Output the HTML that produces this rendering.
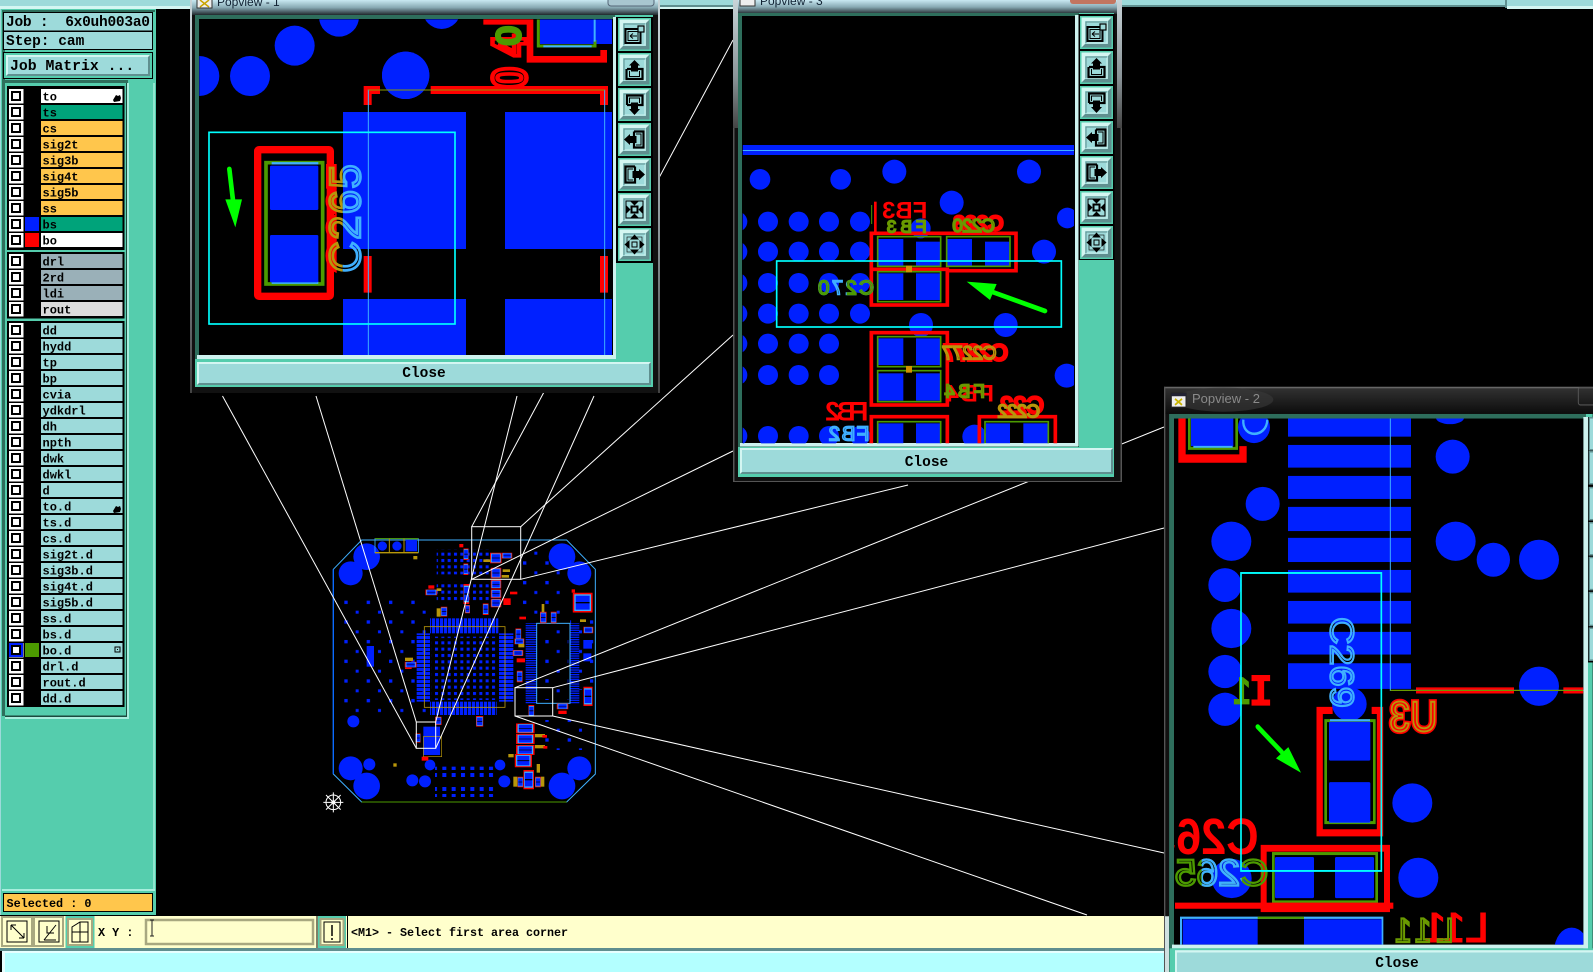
<!DOCTYPE html>
<html><head><meta charset="utf-8"><title>Popview</title>
<style>
html,body{margin:0;padding:0;background:#000;width:1593px;height:972px;overflow:hidden}
svg{display:block;position:absolute;left:0;top:0}
.m{font-family:"Liberation Mono",monospace;font-weight:bold;fill:#000}
.r{font-size:12px}
.s{font-family:"Liberation Sans",sans-serif}
.big{font-family:"Liberation Sans",sans-serif;font-weight:bold}
.thin{font-family:"Liberation Sans",sans-serif;fill:none}
</style></head>
<body>
<svg width="1593" height="972" viewBox="0 0 1593 972" xmlns="http://www.w3.org/2000/svg">
<defs>
<linearGradient id="tt" x1="0" y1="0" x2="0" y2="1"><stop offset="0" stop-color="#c9e9f2"/><stop offset=".5" stop-color="#88aab4"/><stop offset="1" stop-color="#20282c"/></linearGradient>
<linearGradient id="edge" x1="0" y1="0" x2="0" y2="1"><stop offset="0" stop-color="#c8d4d8"/><stop offset=".6" stop-color="#8a9498"/><stop offset="1" stop-color="#444"/></linearGradient>
<linearGradient id="dk" x1="0" y1="0" x2="0" y2="1"><stop offset="0" stop-color="#333"/><stop offset="1" stop-color="#0c0c0c"/></linearGradient>
<pattern id="d1" width="19" height="19" patternUnits="userSpaceOnUse"><rect x="3" y="3" width="9" height="9" fill="#0020ff"/></pattern>
<pattern id="d2" width="28" height="21" patternUnits="userSpaceOnUse"><rect x="3" y="3" width="12" height="12" fill="#0020ff"/></pattern>
<pattern id="d3" width="67" height="59" patternUnits="userSpaceOnUse"><rect x="6" y="6" width="10" height="10" fill="#0020ff"/><rect x="40" y="36" width="9" height="9" fill="#0020ff"/></pattern>
<pattern id="sv" width="12" height="12" patternUnits="userSpaceOnUse"><rect x="0" y="0" width="9.500" height="12" fill="#0020ff"/></pattern>
<pattern id="sh" width="12" height="12" patternUnits="userSpaceOnUse"><rect x="0" y="0" width="12" height="9.500" fill="#0020ff"/></pattern>
<pattern id="sh7" width="7" height="7" patternUnits="userSpaceOnUse"><rect x="0" y="0" width="7" height="4" fill="#0020ff"/></pattern>
<symbol id="k" viewBox="0 0 30 30" preserveAspectRatio="none">
<rect x="1.500" y="1.500" width="27" height="27" fill="#000" stroke="#f00" stroke-width="3"/>
<rect x="3" y="3" width="24" height="11" fill="#0020ff"/><rect x="3" y="16" width="24" height="11" fill="#0020ff"/>
<rect x="3.500" y="3.500" width="23" height="23" fill="none" stroke="#3fb0ff" stroke-width="2"/>
</symbol>
<g id="c"><rect x="9" y="0" width="14.500" height="14.500" fill="#fff"/><rect x="11" y="2" width="10" height="10" fill="#000"/><rect x="13" y="4" width="6" height="6" fill="#fff"/></g>
<g id="bb"><rect width="33" height="33" fill="#55cdad"/><rect x="1.500" y="1.500" width="30" height="30" fill="#5f8f8f"/><path d="M1.500 1.500H31.500L28 5H5V28L1.500 31.500Z" fill="#d4f6f2"/><rect x="5" y="5" width="23" height="23" fill="#9ddada"/><path d="M6 27V6H27" fill="none" stroke="#5f8f8f"/><path d="M6.500 27H27V6.500" fill="none" stroke="#cdf2ef"/></g>
<g id="b1"><use href="#bb"/><rect x="7.500" y="11" width="15" height="14" fill="none" stroke="#000" stroke-width="2"/><rect x="10" y="13.500" width="10" height="9" fill="none" stroke="#000"/><path d="M12 18H19M12 18l3-2.500M12 18l3 2.500" stroke="#000" fill="none"/><rect x="20" y="8" width="6" height="6" fill="#9ddada" stroke="#000" stroke-width="1.200"/></g>
<g id="b2"><use href="#bb"/><path d="M9 16H13M20 16H24.500V26H8.500V16" fill="none" stroke="#000" stroke-width="2.200"/><path d="M11.500 18V23.500H21.500V18" fill="none" stroke="#000"/><path d="M16.500 7L22 12.500H20V18.500H13V12.500H11Z" fill="#000"/></g>
<g id="b3"><use href="#bb"/><path d="M9 17V7.500H24.500V17H20M13 17H9" fill="none" stroke="#000" stroke-width="2.200"/><path d="M11.500 15V10H21.500V15" fill="none" stroke="#000"/><path d="M16.500 27L22 21H20V14.500H13V21H11Z" fill="#000"/></g>
<g id="b4"><use href="#bb"/><path d="M16 8.500H25.500V24.500H16V20M16 13V8.500" fill="none" stroke="#000" stroke-width="2.200"/><path d="M18 11H23V22H18" fill="none" stroke="#000"/><path d="M6 16.500L12 11V13H18.500V20H12V22Z" fill="#000"/></g>
<g id="b5"><use href="#bb"/><path d="M17 8.500H7.500V24.500H17V20M17 13V8.500" fill="none" stroke="#000" stroke-width="2.200"/><path d="M15 11H10V22H15" fill="none" stroke="#000"/><path d="M27 16.500L21 11V13H14.500V20H21V22Z" fill="#000"/></g>
<g id="b6"><use href="#bb"/><rect x="8" y="8" width="17" height="17" fill="none" stroke="#000"/><rect x="13.500" y="13.500" width="6" height="6" fill="none" stroke="#000" stroke-width="2"/><path d="M16.500 12.500L11.500 7.500H21.500ZM16.500 20.500L11.500 25.500H21.500ZM12.500 16.500L7.500 11.500V21.500ZM20.500 16.500L25.500 11.500V21.500Z" fill="#000"/></g>
<g id="b7"><use href="#bb"/><rect x="14" y="14" width="5" height="5" fill="none" stroke="#000"/><path d="M16.500 6.500L12 11.500H21ZM16.500 26.500L12 21.500H21ZM6.500 16.500L11.500 12V21ZM26.500 16.500L21.500 12V21Z" fill="#000"/><rect x="9" y="9" width="15" height="15" fill="none" stroke="#000" stroke-width=".6"/></g>
<g id="side"><use href="#b1" y="0"/><use href="#b2" y="35"/><use href="#b3" y="70"/><use href="#b4" y="105"/><use href="#b5" y="140"/><use href="#b6" y="175"/><use href="#b7" y="210"/></g>
<clipPath id="cp1"><rect x="28" y="58" width="1240" height="1007"/></clipPath>
<clipPath id="cp1a"><rect x="400" y="480" width="40" height="350"/></clipPath>
<clipPath id="cp1g"><rect x="400" y="480" width="58" height="350"/></clipPath>
<clipPath id="cp1b"><rect x="458" y="480" width="70" height="350"/></clipPath>
<clipPath id="cp3"><rect x="38" y="48" width="994" height="1282"/></clipPath>
<clipPath id="cp3g"><rect x="260" y="820" width="40" height="80"/><rect x="350" y="820" width="85" height="80"/></clipPath>
<clipPath id="cp2"><rect x="42" y="102" width="1228" height="1393"/></clipPath>
<clipPath id="cp2b"><rect x="125" y="1260" width="120" height="90"/></clipPath>
</defs>

<rect width="1593" height="972" fill="#000"/>

<!-- top strips -->
<rect x="0" y="0" width="190" height="6" fill="#9ddada"/><rect x="0" y="6" width="190" height="3" fill="#d4f6f2"/>
<rect x="660" y="0" width="74" height="5" fill="#9ddada"/><rect x="660" y="5" width="74" height="2" fill="#5f8f8f"/><rect x="660" y="7" width="74" height="2" fill="#d4f6f2"/>
<rect x="1120" y="0" width="385" height="5" fill="#9ddada"/><rect x="1120" y="5" width="385" height="2" fill="#5f8f8f"/><rect x="1505" y="0" width="2" height="8" fill="#5f8f8f"/>
<rect x="1507" y="0" width="86" height="6" fill="#9ddada"/><rect x="1507" y="6" width="86" height="3" fill="#d4f6f2"/>

<!-- sidebar -->
<rect x="0" y="9" width="156" height="906" fill="#55cdad"/>
<rect x="0" y="9" width="1" height="906" fill="#9ddada"/>
<rect x="2" y="10" width="3" height="706" fill="#2e6e5c"/>
<rect x="2" y="10" width="153" height="2" fill="#2e6e5c"/>
<rect x="3" y="12" width="150" height="38" fill="#000"/>
<rect x="4" y="13" width="148" height="17.500" fill="#9ddada"/><rect x="4" y="32" width="148" height="17" fill="#9ddada"/>
<text class="m" x="6" y="26" font-size="14.500" textLength="144">Job :&#160;&#160;6x0uh003a0</text>
<text class="m" x="6" y="45" font-size="14.500">Step: cam</text>
<rect x="3" y="52" width="150" height="27" fill="#000"/><rect x="4" y="53" width="148" height="25" fill="#55cdad"/>
<rect x="6" y="55" width="144" height="21" fill="#5f8f8f"/><path d="M6 55H150L148 57H8V74L6 76Z" fill="#d4f6f2"/><rect x="8" y="57" width="140" height="17" fill="#9ddada"/>
<text class="m" x="10" y="70" font-size="14.800">Job Matrix ...</text>
<rect x="2" y="80" width="126" height="3" fill="#2e6e5c"/>
<rect x="5" y="83" width="121" height="632" fill="#55cdad"/>
<rect x="5" y="715.500" width="122" height="1.500" fill="#1d4a3e"/>
<rect x="126" y="83" width="1" height="634" fill="#1d4a3e"/>
<rect x="127" y="83" width="2" height="636" fill="#a8eedd"/><rect x="5" y="717" width="124" height="2" fill="#a8eedd"/>
<rect x="153" y="83" width="2" height="808" fill="#8fe6cf"/>
<rect x="2" y="889" width="153" height="2" fill="#a8eedd"/>
<rect x="7" y="86" width="117.500" height="164" fill="#000"/>
<rect x="7" y="252" width="117.500" height="66.500" fill="#000"/>
<rect x="7" y="321" width="117.500" height="386" fill="#000"/>

<g class="m r">
<g fill="#fff"><rect x="41" y="89" width="81.500" height="14"/><rect x="41" y="233" width="81.500" height="14"/></g>
<g fill="#00a37a"><rect x="41" y="105" width="81.500" height="14"/><rect x="41" y="217" width="81.500" height="14"/></g>
<g fill="#ffc64c"><rect x="41" y="121" width="81.500" height="14"/><rect x="41" y="137" width="81.500" height="14"/><rect x="41" y="153" width="81.500" height="14"/><rect x="41" y="169" width="81.500" height="14"/><rect x="41" y="185" width="81.500" height="14"/><rect x="41" y="201" width="81.500" height="14"/></g>
<g fill="#9ab0b8"><rect x="41" y="254" width="81.500" height="14"/><rect x="41" y="270" width="81.500" height="14"/><rect x="41" y="286" width="81.500" height="14"/></g>
<rect x="41" y="302" width="81.500" height="14" fill="#dcdcdc"/>
<g fill="#9ddada"><rect x="41" y="323" width="81.500" height="14"/><rect x="41" y="339" width="81.500" height="14"/><rect x="41" y="355" width="81.500" height="14"/><rect x="41" y="371" width="81.500" height="14"/><rect x="41" y="387" width="81.500" height="14"/><rect x="41" y="403" width="81.500" height="14"/><rect x="41" y="419" width="81.500" height="14"/><rect x="41" y="435" width="81.500" height="14"/><rect x="41" y="451" width="81.500" height="14"/><rect x="41" y="467" width="81.500" height="14"/><rect x="41" y="483" width="81.500" height="14"/><rect x="41" y="499" width="81.500" height="14"/><rect x="41" y="515" width="81.500" height="14"/><rect x="41" y="531" width="81.500" height="14"/><rect x="41" y="547" width="81.500" height="14"/><rect x="41" y="563" width="81.500" height="14"/><rect x="41" y="579" width="81.500" height="14"/><rect x="41" y="595" width="81.500" height="14"/><rect x="41" y="611" width="81.500" height="14"/><rect x="41" y="627" width="81.500" height="14"/><rect x="41" y="643" width="81.500" height="14"/><rect x="41" y="659" width="81.500" height="14"/><rect x="41" y="675" width="81.500" height="14"/><rect x="41" y="691" width="81.500" height="14"/></g>
</g>
<use href="#c" y="89"/><use href="#c" y="105"/><use href="#c" y="121"/><use href="#c" y="137"/><use href="#c" y="153"/><use href="#c" y="169"/><use href="#c" y="185"/><use href="#c" y="201"/><use href="#c" y="217"/><use href="#c" y="233"/>
<use href="#c" y="254"/><use href="#c" y="270"/><use href="#c" y="286"/><use href="#c" y="302"/>
<use href="#c" y="323"/><use href="#c" y="339"/><use href="#c" y="355"/><use href="#c" y="371"/><use href="#c" y="387"/><use href="#c" y="403"/><use href="#c" y="419"/><use href="#c" y="435"/><use href="#c" y="451"/><use href="#c" y="467"/><use href="#c" y="483"/><use href="#c" y="499"/><use href="#c" y="515"/><use href="#c" y="531"/><use href="#c" y="547"/><use href="#c" y="563"/><use href="#c" y="579"/><use href="#c" y="595"/><use href="#c" y="611"/><use href="#c" y="627"/><use href="#c" y="643"/><use href="#c" y="659"/><use href="#c" y="675"/><use href="#c" y="691"/>
<rect x="10" y="644" width="12" height="12" fill="none" stroke="#0020ff" stroke-width="2"/>
<rect x="25" y="217" width="14" height="14" fill="#0020ff"/><rect x="25" y="233" width="14" height="14" fill="#f00"/><rect x="25" y="643" width="14" height="14" fill="#4c9a00"/>
<g class="m r">
<text x="42.500" y="100.500">to</text><text x="42.500" y="116.500">ts</text><text x="42.500" y="132.500">cs</text><text x="42.500" y="148.500">sig2t</text><text x="42.500" y="164.500">sig3b</text><text x="42.500" y="180.500">sig4t</text><text x="42.500" y="196.500">sig5b</text><text x="42.500" y="212.500">ss</text><text x="42.500" y="228.500">bs</text><text x="42.500" y="244.500">bo</text>
<text x="42.500" y="265.500">drl</text><text x="42.500" y="281.500">2rd</text><text x="42.500" y="297.500">ldi</text><text x="42.500" y="313.500">rout</text>
<text x="42.500" y="334.500">dd</text><text x="42.500" y="350.500">hydd</text><text x="42.500" y="366.500">tp</text><text x="42.500" y="382.500">bp</text><text x="42.500" y="398.500">cvia</text><text x="42.500" y="414.500">ydkdrl</text><text x="42.500" y="430.500">dh</text><text x="42.500" y="446.500">npth</text><text x="42.500" y="462.500">dwk</text><text x="42.500" y="478.500">dwkl</text><text x="42.500" y="494.500">d</text><text x="42.500" y="510.500">to.d</text><text x="42.500" y="526.500">ts.d</text><text x="42.500" y="542.500">cs.d</text><text x="42.500" y="558.500">sig2t.d</text><text x="42.500" y="574.500">sig3b.d</text><text x="42.500" y="590.500">sig4t.d</text><text x="42.500" y="606.500">sig5b.d</text><text x="42.500" y="622.500">ss.d</text><text x="42.500" y="638.500">bs.d</text><text x="42.500" y="654.500">bo.d</text><text x="42.500" y="670.500">drl.d</text><text x="42.500" y="686.500">rout.d</text><text x="42.500" y="702.500">dd.d</text>
</g>
<path d="M113 100l3-5 2 1 2-1 1 3-1 3-6 1zM113 511l3-5 2 1 2-1 1 3-1 3-6 1z" fill="#000"/>
<rect x="115" y="647" width="5" height="5" fill="none" stroke="#000"/><rect x="117" y="649" width="1" height="1" fill="#000"/>
<!-- selected -->
<rect x="3" y="893" width="150" height="19" fill="#000"/><rect x="4" y="894" width="148" height="17" fill="#ffc64c"/>
<text class="m" x="6.500" y="907" font-size="11.800">Selected : 0</text>

<!-- board -->
<g transform="translate(320,520) scale(.33333)">
<g fill="#0020ff"><circle cx="140" cy="110" r="40"/><circle cx="92" cy="160" r="36"/><circle cx="726" cy="110" r="40"/><circle cx="778" cy="160" r="36"/>
<circle cx="92" cy="745" r="36"/><circle cx="140" cy="798" r="40"/><circle cx="778" cy="745" r="36"/><circle cx="726" cy="798" r="40"/>
<circle cx="148" cy="733" r="18"/><circle cx="330" cy="735" r="16"/><circle cx="540" cy="735" r="16"/><circle cx="277" cy="781" r="18"/><circle cx="315" cy="784" r="18"/><circle cx="553" cy="784" r="18"/><circle cx="100" cy="604" r="18"/>
<rect x="140" y="378" width="22" height="62"/></g>
<rect x="350" y="88" width="160" height="75" fill="url(#d1)"/>
<rect x="350" y="184" width="160" height="62" fill="url(#d1)"/>
<rect x="335" y="350" width="195" height="190" fill="url(#d1)"/>
<rect x="345" y="740" width="180" height="36" fill="url(#d2)"/>
<rect x="345" y="795" width="180" height="36" fill="url(#d2)"/>
<rect x="70" y="230" width="260" height="360" fill="url(#d3)"/>
<rect x="590" y="90" width="150" height="200" fill="url(#d3)"/>
<rect x="655" y="320" width="90" height="220" fill="url(#d3)"/>
<rect x="660" y="600" width="130" height="90" fill="url(#d3)"/>
<rect x="750" y="290" width="70" height="220" fill="url(#d3)"/>
<rect x="330" y="295" width="205" height="45" fill="url(#sv)"/><rect x="330" y="545" width="200" height="40" fill="url(#sv)"/>
<rect x="290" y="340" width="40" height="205" fill="url(#sh)"/><rect x="537" y="340" width="43" height="205" fill="url(#sh)"/>
<rect x="313" y="320" width="242" height="242" fill="none" stroke="#b8960a" stroke-width="2.500"/>
<rect x="617" y="310" width="33" height="240" fill="url(#sh7)"/><rect x="750" y="310" width="28" height="240" fill="url(#sh7)"/>
<rect x="650" y="310" width="100" height="240" fill="none" stroke="#3fb0ff" stroke-width="3"/>
<rect x="310" y="620" width="50" height="85" fill="#0020ff"/>
<rect x="310" y="650" width="55" height="60" fill="none" stroke="#b8960a" stroke-width="2"/>
<rect x="790" y="360" width="26" height="26" fill="#0020ff"/><rect x="790" y="400" width="24" height="24" fill="#0020ff"/>
<path d="M40 148L125 60H740L826 148V762L740 846H125L40 762Z" fill="none" stroke="#3fb0ff" stroke-width="3"/>
<path d="M125 846H740" stroke="#4c9a00" stroke-width="3"/>
<path d="M40 148V762" stroke="#0a6aff" stroke-width="4"/>
<rect x="165" y="56" width="130" height="42" fill="none" stroke="#3fb0ff" stroke-width="2.500"/><path d="M165 56H295" stroke="#4c9a00" stroke-width="3"/><path d="M165 98H295" stroke="#b8960a" stroke-width="4"/><path d="M208 56V98M252 56V98" stroke="#b8960a" stroke-width="3"/>
<circle cx="187" cy="78" r="14" fill="#0020ff"/><circle cx="231" cy="78" r="14" fill="#0020ff"/><rect x="257" y="60" width="34" height="34" fill="#0020ff"/>
<use href="#k" x="316" y="208" width="36" height="18"/><use href="#k" x="254" y="425" width="36" height="18"/><use href="#k" x="510" y="98" width="35" height="32"/><use href="#k" x="545" y="98" width="32" height="18"/><use href="#k" x="512" y="143" width="32" height="32"/>
<use href="#k" x="512" y="180" width="32" height="26"/><use href="#k" x="512" y="208" width="32" height="26"/><use href="#k" x="512" y="236" width="32" height="26"/>
<use href="#k" x="430" y="85" width="16" height="35"/><use href="#k" x="430" y="130" width="15" height="35"/><use href="#k" x="430" y="192" width="18" height="60"/><use href="#k" x="435" y="255" width="15" height="25"/><use href="#k" x="488" y="250" width="18" height="35"/><use href="#k" x="362" y="260" width="20" height="30"/><use href="#k" x="660" y="275" width="20" height="35"/><use href="#k" x="692" y="275" width="18" height="35"/><use href="#k" x="586" y="325" width="18" height="35"/><use href="#k" x="583" y="355" width="30" height="18"/><use href="#k" x="578" y="390" width="32" height="18"/><use href="#k" x="590" y="452" width="18" height="35"/><use href="#k" x="758" y="218" width="60" height="60"/><use href="#k" x="790" y="500" width="28" height="58"/><use href="#k" x="625" y="555" width="18" height="35"/><use href="#k" x="710" y="550" width="35" height="18"/><use href="#k" x="588" y="610" width="56" height="30"/><use href="#k" x="588" y="642" width="56" height="30"/><use href="#k" x="588" y="675" width="56" height="30"/><use href="#k" x="584" y="702" width="52" height="40"/><use href="#k" x="610" y="750" width="32" height="58"/><use href="#k" x="592" y="770" width="18" height="32"/><use href="#k" x="645" y="770" width="18" height="32"/><use href="#k" x="468" y="588" width="22" height="32"/><use href="#k" x="345" y="590" width="20" height="25"/><use href="#k" x="286" y="640" width="16" height="28"/><use href="#k" x="790" y="320" width="30" height="20"/>
<g fill="#b8960a"><rect x="280" y="108" width="12" height="10"/><rect x="220" y="730" width="10" height="10"/><rect x="780" y="298" width="18" height="8"/><rect x="650" y="732" width="10" height="26"/><rect x="645" y="642" width="30" height="10"/><rect x="645" y="675" width="30" height="10"/><rect x="565" y="702" width="16" height="10"/><rect x="490" y="118" width="22" height="8"/><rect x="548" y="148" width="22" height="8"/><rect x="545" y="165" width="22" height="8"/><rect x="665" y="252" width="8" height="24"/><rect x="350" y="205" width="14" height="8"/><rect x="255" y="413" width="24" height="10"/><rect x="350" y="265" width="12" height="25"/><rect x="595" y="372" width="18" height="10"/><rect x="580" y="770" width="12" height="30"/><rect x="663" y="770" width="10" height="30"/></g>
<g fill="#f00"><rect x="418" y="72" width="12" height="10"/><rect x="550" y="235" width="22" height="20"/><rect x="570" y="215" width="22" height="8"/><rect x="590" y="415" width="25" height="12"/><rect x="715" y="572" width="25" height="10"/><rect x="305" y="710" width="20" height="12"/><rect x="755" y="208" width="10" height="10"/><rect x="598" y="290" width="20" height="8"/><rect x="667" y="645" width="14" height="8"/><rect x="670" y="678" width="12" height="8"/><rect x="325" y="196" width="18" height="10"/><rect x="255" y="443" width="20" height="4"/></g>
<g fill="none" stroke="#fff" stroke-width="3"><circle cx="40" cy="847" r="22"/><path d="M40 817V877M10 847H70M18 825L62 869M62 825L18 869"/></g>
<circle cx="40" cy="847" r="6" fill="#fff"/>
</g>

<!-- connector lines -->
<g stroke="#fff" stroke-width="1" fill="none">
<path d="M222.500 396L416.300 748.300"/><path d="M316 396L416.300 722"/><path d="M517 396L435.700 722"/><path d="M594 396L435.700 748.300"/>
<path d="M471.700 526.700L733 40"/><path d="M520.700 526.700L733 335"/><path d="M471.700 579.300L733 451"/><path d="M520.700 579.300L908 485"/>
<path d="M515 687.700L1164 427"/><path d="M552.700 687.700L1164 528"/><path d="M552.700 716L1164 853"/><path d="M515 716L1087 915"/>
<rect x="471.700" y="526.700" width="49" height="52.600"/><rect x="515" y="687.700" width="37.700" height="28.300"/><rect x="416.300" y="722" width="19.400" height="26.300"/>
</g>

<!-- bottom bar -->
<rect x="0" y="916" width="1170" height="32" fill="#ffffcc"/>
<rect x="0" y="948" width="1170" height="3" fill="#5f8f8f"/>
<rect x="2" y="951" width="1165" height="21" fill="#b3ffff"/><rect x="2" y="951" width="1165" height="2" fill="#e6ffff"/><rect x="2" y="951" width="3" height="21" fill="#e6ffff"/><rect x="0" y="951" width="2" height="21" fill="#000"/>
<!-- toolbar buttons -->
<g fill="none" stroke="#a8a880">
<rect x="2" y="917" width="30" height="29" stroke-width="2"/><rect x="34" y="917" width="29" height="29" stroke-width="2"/>
</g>
<rect x="7" y="921" width="20" height="21" fill="none" stroke="#000"/><path d="M11 925L24 938M11 925v5M11 925h5M24 938v-5M24 938h-5" fill="none" stroke="#000"/>
<rect x="39" y="921" width="20" height="21" fill="none" stroke="#000"/><path d="M44 940L56 925M44 940H56M47 926v7h7" fill="none" stroke="#000"/>
<rect x="65.500" y="916" width="29" height="32" fill="#55cdad"/><rect x="68" y="919" width="24" height="26" fill="#ffffcc" stroke="#a8a880" stroke-width="2"/>
<path d="M72 942V927L80 922H88V942ZM72 932H88M80 922V942" fill="none" stroke="#000"/>
<text class="m" x="98" y="936" font-size="11.800">X Y :</text>
<rect x="143" y="916" width="173" height="32" fill="#ffffcc"/><rect x="146" y="920" width="167" height="24" fill="none" stroke="#a8a880" stroke-width="2.500"/>
<path d="M152 920V936M150 920h4M150 936h4" stroke="#222" fill="none"/>
<rect x="316.500" y="916" width="1" height="32" fill="#000"/>
<rect x="318" y="916" width="28" height="32" fill="#55cdad"/><rect x="320.500" y="919" width="23" height="26" fill="#ffffcc" stroke="#a8a880" stroke-width="2"/>
<rect x="324" y="922" width="16" height="20" fill="none" stroke="#000"/><path d="M332 925V936M332 938v2" stroke="#000" stroke-width="1.500"/>
<rect x="347" y="916" width="1" height="32" fill="#000"/>
<text class="m" x="351" y="936" font-size="11.700" textLength="217">&lt;M1&gt; - Select first area corner</text>
<rect x="0" y="915" width="155" height="1" fill="#000"/>

<!-- POPVIEW 1 -->
<rect x="190" y="-10" width="470" height="403" rx="4" fill="#111"/>
<rect x="190" y="0" width="470" height="15" fill="url(#tt)"/>
<rect x="658" y="0" width="2" height="393" fill="url(#edge)"/><rect x="190" y="0" width="2" height="393" fill="url(#edge)"/>
<rect x="197" y="-2" width="15" height="10" fill="#eee" stroke="#333"/><path d="M200 0l9 7M209 0l-9 7" stroke="#c9a400" stroke-width="1.500"/>
<text class="s" x="217" y="6" font-size="12" fill="#123">Popview - 1</text>
<rect x="608" y="-6" width="46" height="12" rx="3" fill="#a8c6d0" stroke="#567"/>
<rect x="195" y="15" width="458" height="372" fill="#55cdad"/>
<rect x="195" y="15" width="420" height="344" fill="#2e6e5c"/>
<rect x="613" y="17" width="3" height="342" fill="#cdf2ef"/><rect x="197" y="355" width="419" height="4" fill="#cdf2ef"/>
<rect x="199" y="19" width="414" height="336" fill="#000"/>
<rect x="616" y="17" width="37" height="246" fill="#000"/>
<g transform="translate(190,0) scale(.33333)" clip-path="url(#cp1)">
<g fill="#0020ff"><circle cx="314" cy="137" r="60"/><circle cx="180" cy="228" r="60"/><circle cx="28" cy="228" r="60"/><circle cx="647" cy="226" r="71"/><circle cx="447" cy="50" r="60"/><circle cx="755" cy="30" r="57"/>
<rect x="459" y="336" width="369" height="411"/><rect x="945" y="336" width="321" height="411"/><rect x="459" y="897" width="369" height="168"/><rect x="945" y="897" width="321" height="168"/><rect x="1050" y="58" width="216" height="74"/></g>
<path d="M880 64H1020V178H1241V150" fill="none" stroke="#f00" stroke-width="20"/>
<path d="M1045 58V138H1215V120" fill="none" stroke="#4c9a00" stroke-width="9"/><path d="M1060 139H1205M1214 58V125" stroke="#3fb0ff" stroke-width="6" fill="none"/>
<text class="big" transform="translate(1008,265) rotate(-90) scale(1,1.25)" font-size="115" fill="none" stroke="#f00" stroke-width="11" textLength="160">04</text>
<text class="thin" transform="translate(990,135) rotate(-90)" font-size="100" stroke="#4c9a00" stroke-width="11" textLength="60">0</text>
<path d="M533 315V270H570M722 270H1242V315" fill="none" stroke="#f00" stroke-width="24"/>
<path d="M533 768V878M1242 768V878" stroke="#f00" stroke-width="24"/>
<circle cx="647" cy="226" r="71" fill="#0020ff"/>
<path d="M535 1065V270H1244V1065" fill="none" stroke="#3fb0ff" stroke-width="3"/><path d="M535 270H1244" stroke="#8a9a00" stroke-width="3"/>
<rect x="203" y="449" width="218" height="440" fill="#000" stroke="#f00" stroke-width="22" rx="4"/>
<rect x="228" y="488" width="170" height="364" fill="none" stroke="#4c9a00" stroke-width="11"/>
<path d="M245 490H385M245 848H385" stroke="#3fb0ff" stroke-width="7"/>
<rect x="240" y="497" width="145" height="133" rx="4" fill="#0020ff"/><rect x="240" y="705" width="145" height="142" rx="4" fill="#0020ff"/>
<g clip-path="url(#cp1a)"><text class="thin" transform="translate(510,818) rotate(-90)" font-size="130" stroke="#f00" stroke-width="24" textLength="325">C265</text></g>
<g clip-path="url(#cp1g)"><text class="thin" transform="translate(510,818) rotate(-90)" font-size="130" stroke="#b8960a" stroke-width="8" textLength="325">C265</text></g>
<g clip-path="url(#cp1b)"><text class="thin" transform="translate(510,818) rotate(-90)" font-size="130" stroke="#3fb0ff" stroke-width="8" textLength="325">C265</text></g>
<rect x="57" y="397" width="738" height="575" fill="none" stroke="#00ffff" stroke-width="5"/>
<path d="M118 507L130 610" stroke="#0f0" stroke-width="14" stroke-linecap="round"/><path d="M106 598H156L136 682Z" fill="#0f0"/>
</g>
<g transform="translate(618,18)"><use href="#side"/></g>
<rect x="197" y="362" width="454" height="23" fill="#5f8f8f"/><path d="M197 362H651L649 364H199V383L197 385Z" fill="#d4f6f2"/><rect x="199" y="364" width="450" height="19" fill="#9ddada"/>
<text class="m" x="424" y="377" font-size="14.500" text-anchor="middle">Close</text>

<!-- POPVIEW 3 -->
<rect x="733" y="-10" width="389" height="492" rx="4" fill="#111"/>
<rect x="733" y="0" width="389" height="14" fill="url(#tt)"/>
<rect x="733" y="0" width="5" height="128" fill="url(#edge)"/><rect x="1117" y="0" width="5" height="128" fill="url(#edge)"/>
<rect x="733" y="128" width="1.500" height="354" fill="#555"/><rect x="1120.500" y="128" width="1.500" height="354" fill="#555"/><rect x="733" y="481" width="389" height="1" fill="#555"/>
<rect x="740" y="-2" width="15" height="8" fill="#eee" stroke="#333"/>
<text class="s" x="760" y="5" font-size="12" fill="#123">Popview - 3</text>
<rect x="1070" y="-5" width="46" height="9" rx="3" fill="#c27560"/>
<rect x="738" y="13" width="376" height="464" fill="#55cdad"/>
<rect x="738" y="13" width="341" height="434" fill="#2e6e5c"/>
<rect x="1075" y="15" width="3.500" height="431" fill="#cdf2ef"/><rect x="740" y="443" width="338" height="3.500" fill="#cdf2ef"/>
<rect x="742" y="16" width="333" height="427" fill="#000"/>
<rect x="1078.500" y="14" width="36" height="246" fill="#000"/>
<g transform="translate(730,0) scale(.33333)" clip-path="url(#cp3)">
<rect x="38" y="435" width="994" height="30" fill="#0020ff"/><rect x="38" y="450" width="994" height="3" fill="#3fb0ff"/>
<g fill="#0020ff">
<circle cx="90" cy="538" r="31"/><circle cx="332" cy="538" r="31"/><circle cx="493" cy="515" r="36"/><circle cx="897" cy="515" r="36"/><circle cx="665" cy="608" r="36"/><circle cx="1012" cy="654" r="31"/><circle cx="942" cy="755" r="36"/><circle cx="1010" cy="1127" r="36"/><circle cx="572" cy="685" r="30"/><circle cx="573" cy="975" r="36"/><circle cx="827" cy="975" r="36"/><circle cx="733" cy="1310" r="36"/>
<circle cx="22" cy="665" r="30"/><circle cx="114" cy="665" r="30"/><circle cx="206" cy="665" r="30"/><circle cx="297" cy="665" r="30"/><circle cx="390" cy="665" r="30"/>
<circle cx="22" cy="755" r="30"/><circle cx="114" cy="755" r="30"/><circle cx="206" cy="755" r="30"/><circle cx="297" cy="755" r="30"/><circle cx="390" cy="755" r="30"/>
<circle cx="22" cy="849" r="30"/><circle cx="114" cy="849" r="30"/><circle cx="206" cy="849" r="30"/><circle cx="297" cy="849" r="30"/><circle cx="390" cy="849" r="30"/>
<circle cx="22" cy="941" r="30"/><circle cx="114" cy="941" r="30"/><circle cx="206" cy="941" r="30"/><circle cx="297" cy="941" r="30"/><circle cx="390" cy="941" r="30"/>
<circle cx="22" cy="1031" r="30"/><circle cx="114" cy="1031" r="30"/><circle cx="206" cy="1031" r="30"/><circle cx="297" cy="1031" r="30"/>
<circle cx="22" cy="1125" r="30"/><circle cx="114" cy="1125" r="30"/><circle cx="206" cy="1125" r="30"/><circle cx="297" cy="1125" r="30"/>
<circle cx="22" cy="1308" r="30"/><circle cx="114" cy="1308" r="30"/><circle cx="206" cy="1308" r="30"/><circle cx="297" cy="1308" r="30"/><circle cx="390" cy="1308" r="30"/>
</g>
<g fill="none" stroke="#f00" stroke-width="11">
<path d="M424 808V700H858V812H652"/><rect x="424" y="808" width="228" height="107"/><rect x="424" y="998" width="228" height="217"/>
<path d="M424 1330V1250H652V1330"/><path d="M748 1330V1250H976V1330"/>
</g>
<g fill="#0020ff">
<rect x="443" y="717" width="77" height="80"/><rect x="558" y="725" width="74" height="72"/><rect x="650" y="717" width="76" height="80"/><rect x="765" y="725" width="75" height="72"/>
<rect x="443" y="820" width="77" height="80"/><rect x="558" y="820" width="74" height="80"/>
<rect x="443" y="1015" width="77" height="80"/><rect x="558" y="1015" width="74" height="80"/><rect x="443" y="1120" width="77" height="82"/><rect x="558" y="1120" width="74" height="82"/>
<rect x="443" y="1270" width="77" height="60"/><rect x="558" y="1270" width="74" height="60"/><rect x="768" y="1270" width="72" height="60"/><rect x="880" y="1270" width="75" height="60"/>
</g>
<g fill="none" stroke="#4c9a00" stroke-width="5">
<rect x="443" y="710" width="189" height="89"/><rect x="650" y="710" width="190" height="89"/><rect x="443" y="815" width="189" height="90"/><rect x="443" y="1010" width="189" height="90"/><rect x="443" y="1112" width="189" height="93"/><path d="M443 1330V1265H632V1330M765 1330V1265H955V1330"/>
</g>
<g fill="#d09000"><rect x="528" y="797" width="18" height="20"/><rect x="528" y="1098" width="18" height="20"/></g>
<text class="big" transform="translate(592,655) scale(-1,1)" font-size="72" fill="#f00">FB3</text>
<text class="thin" transform="translate(590,698) scale(-1,1)" font-size="52" stroke="#6a9a00" stroke-width="5" textLength="120">FB3</text>
<path d="M436 605V700" stroke="#f00" stroke-width="8"/><path d="M425 615V672" stroke="#4c9a00" stroke-width="3"/>
<text class="thin" transform="translate(820,690) scale(-1,1)" font-size="62" stroke="#f00" stroke-width="9" textLength="150">C228</text>
<text class="thin" transform="translate(795,696) scale(-1,1)" font-size="56" stroke="#6a9a00" stroke-width="5" textLength="128">C220</text>
<text class="thin" transform="translate(432,884) scale(-1,1)" font-size="62" stroke="#3fb0ff" stroke-width="4.500" textLength="168">C270</text>
<g clip-path="url(#cp3g)"><text class="thin" transform="translate(432,884) scale(-1,1)" font-size="62" stroke="#4c9a00" stroke-width="4.500" textLength="168">C270</text></g>
<text class="thin" transform="translate(834,1082) scale(-1,1)" font-size="70" stroke="#f00" stroke-width="9" textLength="195">C2277</text>
<text class="thin" transform="translate(800,1078) scale(-1,1)" font-size="58" stroke="#b8960a" stroke-width="4.500" textLength="165">C2277</text>
<text class="big" transform="translate(792,1205) scale(-1,1)" font-size="72" fill="#f00" textLength="145">FB4</text>
<text class="thin" transform="translate(765,1192) scale(-1,1)" font-size="56" stroke="#6a9a00" stroke-width="5" textLength="122">FB4</text>
<text class="thin" transform="translate(942,1240) scale(-1,1)" font-size="72" stroke="#f00" stroke-width="8" textLength="132">C22</text>
<text class="thin" transform="translate(930,1252) scale(-1,1)" font-size="56" stroke="#b8960a" stroke-width="5" textLength="128">C222</text>
<text class="big" transform="translate(415,1262) scale(-1,1)" font-size="80" fill="#f00" textLength="130">FB2</text>
<text class="thin" transform="translate(418,1322) scale(-1,1)" font-size="62" stroke="#3fb0ff" stroke-width="5" textLength="122">FB2</text>
<rect x="140" y="783" width="854" height="198" fill="none" stroke="#00ffff" stroke-width="5"/>
<path d="M945 933L785 875" stroke="#0f0" stroke-width="14" stroke-linecap="round"/><path d="M710 845L800 852L780 900Z" fill="#0f0"/>
</g>
<g transform="translate(1080,16)"><use href="#side"/></g>
<rect x="740" y="448" width="373" height="26" fill="#5f8f8f"/><path d="M740 448H1113L1111 450H742V472L740 474Z" fill="#d4f6f2"/><rect x="742" y="450" width="369" height="22" fill="#9ddada"/>
<text class="m" x="926.500" y="466" font-size="14.500" text-anchor="middle">Close</text>

<!-- POPVIEW 2 -->
<g transform="translate(1160,380) scale(.33333,.37764)">
<rect x="12" y="18" width="1300" height="1560" rx="8" fill="#111"/>
<rect x="12" y="18" width="1300" height="72" fill="url(#dk)"/>
<rect x="12" y="18" width="1300" height="4" fill="#666"/><rect x="12" y="18" width="4" height="1560" fill="#555"/>
<ellipse cx="190" cy="52" rx="150" ry="32" fill="#3a3a3a" opacity=".6"/>
<rect x="34" y="35" width="44" height="37" fill="#eee" stroke="#222" stroke-width="3"/><rect x="34" y="35" width="44" height="8" fill="#223"/><path d="M45 50L66 66M66 50L45 66" stroke="#c9b400" stroke-width="5"/>
<rect x="1255" y="20" width="60" height="46" rx="6" fill="none" stroke="#555" stroke-width="3"/>
<rect x="15" y="1420" width="12" height="150" fill="#cfe0e0"/>
<rect x="28" y="90" width="1270" height="1480" fill="#55cdad"/>
<rect x="28" y="90" width="1250" height="1415" fill="#2e6e5c"/>
<rect x="1270" y="98" width="14" height="1407" fill="#cdf2ef"/><rect x="36" y="1495" width="1248" height="10" fill="#cdf2ef"/>
<rect x="42" y="102" width="1228" height="1393" fill="#000"/>
<rect x="1284" y="98" width="30" height="650" fill="#000"/>
<g fill="#9ddada" stroke="#5f8f8f" stroke-width="4"><rect x="1288" y="100" width="20" height="85"/><rect x="1288" y="190" width="20" height="85"/><rect x="1288" y="285" width="20" height="85"/><rect x="1288" y="378" width="20" height="85"/><rect x="1288" y="470" width="20" height="85"/><rect x="1288" y="563" width="20" height="87"/><rect x="1288" y="657" width="20" height="85"/></g>
<g clip-path="url(#cp2)">
<g fill="#0020ff">
<rect x="384" y="102" width="369" height="48"/><rect x="384" y="172" width="369" height="60"/><rect x="384" y="254" width="369" height="61"/><rect x="384" y="336" width="369" height="64"/><rect x="384" y="418" width="369" height="64"/><rect x="384" y="503" width="369" height="60"/><rect x="384" y="585" width="369" height="60"/><rect x="384" y="667" width="369" height="60"/><rect x="384" y="750" width="369" height="68"/>
<ellipse cx="870" cy="100" rx="42" ry="17"/><ellipse cx="878" cy="203" rx="51" ry="45"/><ellipse cx="308" cy="328" rx="51" ry="45"/><ellipse cx="214" cy="427" rx="60" ry="52"/><ellipse cx="195" cy="543" rx="50" ry="45"/><ellipse cx="214" cy="658" rx="60" ry="52"/><ellipse cx="195" cy="772" rx="50" ry="44"/><ellipse cx="195" cy="872" rx="50" ry="44"/><ellipse cx="887" cy="427" rx="60" ry="52"/><ellipse cx="1000" cy="476" rx="50" ry="45"/><ellipse cx="1137" cy="476" rx="60" ry="53"/><ellipse cx="1137" cy="811" rx="60" ry="52"/><ellipse cx="757" cy="1120" rx="60" ry="52"/><ellipse cx="775" cy="1318" rx="60" ry="53"/><ellipse cx="215" cy="1320" rx="60" ry="52"/><ellipse cx="1235" cy="1510" rx="52" ry="60"/><ellipse cx="282" cy="125" rx="48" ry="42"/>
<rect x="93" y="102" width="127" height="73"/>
</g>
<path d="M66 102V208H249V175" fill="none" stroke="#f00" stroke-width="22"/>
<path d="M88 102V181H230V102" fill="none" stroke="#4c9a00" stroke-width="8"/><path d="M100 177H218" stroke="#3fb0ff" stroke-width="5"/>
<path d="M250 105C245 155 320 155 322 105" fill="none" stroke="#3fb0ff" stroke-width="7"/>
<path d="M768 822H1062M1210 822H1270" stroke="#f00" stroke-width="16"/>
<path d="M691 102V822H1270" fill="none" stroke="#3fb0ff" stroke-width="3"/><path d="M691 822H1270" stroke="#6a9a00" stroke-width="3"/>
<path d="M518 875H479V1199H660V875H635" fill="none" stroke="#f00" stroke-width="19"/>
<ellipse cx="568" cy="858" rx="52" ry="45" fill="#0020ff"/>
<rect x="497" y="902" width="146" height="270" fill="none" stroke="#4c9a00" stroke-width="8"/>
<path d="M510 901H630M510 1170H630" stroke="#3fb0ff" stroke-width="5"/>
<rect x="507" y="905" width="124" height="103" rx="4" fill="#0020ff"/><rect x="507" y="1065" width="124" height="107" rx="4" fill="#0020ff"/>
<rect x="311" y="1240" width="370" height="160" fill="none" stroke="#f00" stroke-width="18"/>
<rect x="340" y="1254" width="310" height="128" fill="none" stroke="#4c9a00" stroke-width="8"/>
<rect x="345" y="1263" width="117" height="109" rx="4" fill="#0020ff"/><rect x="525" y="1263" width="117" height="109" rx="4" fill="#0020ff"/>
<path d="M45 1392H700" stroke="#f00" stroke-width="16"/>
<path d="M63 1495V1424H667V1495" fill="none" stroke="#3fb0ff" stroke-width="6"/><path d="M293 1424H432" stroke="#4c9a00" stroke-width="6"/>
<rect x="68" y="1428" width="225" height="67" fill="#0020ff"/><rect x="432" y="1428" width="233" height="67" fill="#0020ff"/>
<text class="thin" transform="translate(512,628) rotate(90)" font-size="100" stroke="#3fb0ff" stroke-width="6" textLength="240">C269</text>
<text class="m" transform="translate(338,860) scale(-1,1)" font-size="118" style="fill:#f00" stroke="#f00" stroke-width="3">I</text>
<text class="thin" transform="translate(272,855) scale(-1,1)" font-size="92" stroke="#4c9a00" stroke-width="7">1</text>
<text class="thin" transform="translate(832,930) scale(-1,1)" font-size="112" stroke="#f00" stroke-width="14" textLength="144">U3</text>
<text class="thin" transform="translate(832,930) scale(-1,1)" font-size="112" stroke="#b8960a" stroke-width="5" textLength="144">U3</text>
<text class="big" transform="translate(296,1255) scale(-1,1)" font-size="135" fill="#f00">C265</text>
<text class="thin" transform="translate(325,1338) scale(-1.2,1)" font-size="98" stroke="#4c9a00" stroke-width="6">C265</text>
<g clip-path="url(#cp2b)"><text class="thin" transform="translate(325,1338) scale(-1.2,1)" font-size="98" stroke="#3fb0ff" stroke-width="6">C265</text></g>
<text class="big" transform="translate(985,1490) scale(-1,1)" font-size="115" fill="#f00">L11</text>
<text class="thin" transform="translate(880,1488) scale(-1,1)" font-size="90" stroke="#6a9a00" stroke-width="6" textLength="175">L11</text>
<rect x="243" y="511" width="421" height="789" fill="none" stroke="#00ffff" stroke-width="5"/>
<path d="M293 918L365 985" stroke="#0f0" stroke-width="13" stroke-linecap="round"/><path d="M423 1040L348 1002L385 972Z" fill="#0f0"/>
</g>
<rect x="34" y="1505" width="1270" height="75" fill="#55cdad"/>
<rect x="45" y="1510" width="1260" height="70" fill="#9ddada"/><path d="M45 1510H1305V1516H51V1580H45Z" fill="#d4f6f2"/>
</g>
<text class="s" x="1192" y="403" font-size="13" fill="#8a8a8a">Popview - 2</text>
<text class="m" x="1397" y="967" font-size="14.500" text-anchor="middle">Close</text>
</svg>
</body></html>
